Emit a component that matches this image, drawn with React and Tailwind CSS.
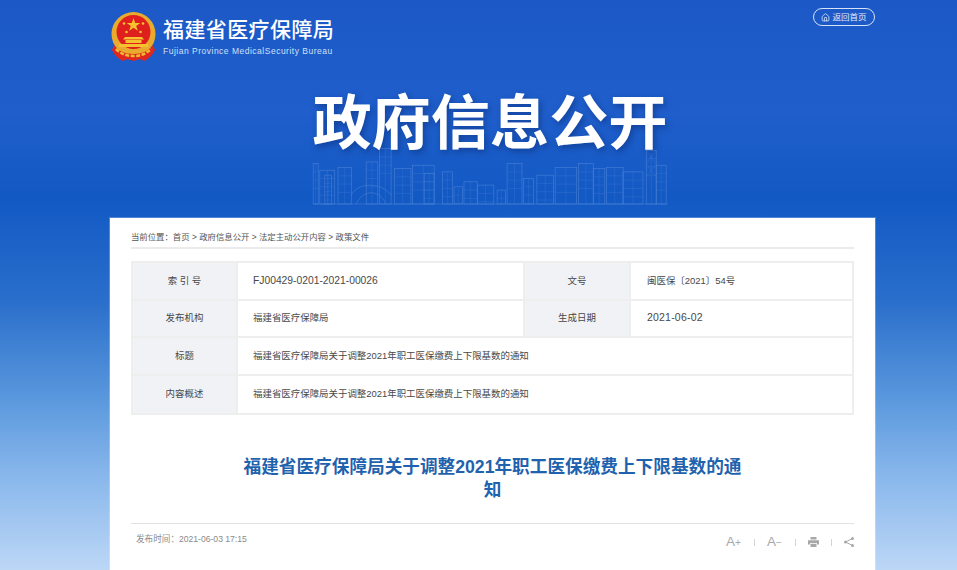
import { Home } from 'lucide-react'

const CJK = 'font-["Liberation_Sans","Noto_Sans_CJK_SC",sans-serif]'

function Emblem() {
  return (
    <svg width="47" height="50" viewBox="0 0 47 50" className="shrink-0">
      <circle cx="23.5" cy="22" r="22" fill="#e9ab2d" />
      <circle cx="23.5" cy="20" r="17" fill="#df1f1d" />
      <path d="M23.5 6l1.7 4.9h5.1l-4.1 3 1.6 4.9-4.3-3-4.3 3 1.6-4.9-4.1-3h5.1z" fill="#f5c12e" />
      <circle cx="14" cy="11.5" r="1.3" fill="#f5c12e" />
      <circle cx="33" cy="11.5" r="1.3" fill="#f5c12e" />
      <circle cx="16.5" cy="20" r="1.3" fill="#f5c12e" />
      <circle cx="30.5" cy="20" r="1.3" fill="#f5c12e" />
      <path d="M15 25h17l2 2.5H13zM15.5 28h16v3h-16zM9 32h29v3H9z" fill="#f5c12e" />
      <path d="M4 33c4 6 11 9 19.5 9S39 39 43 33l2 5c-3 6-7 9-11 11l-4-2-6.500 2-6.500-2-4 2c-4-2-8-5-11-11z" fill="#e0271f" />
      <path d="M6 37c5 5 11 7 17.500 7S36 42 41 37" stroke="#f2ba30" strokeWidth="2.500" fill="none" strokeDasharray="4 1.500" />
    </svg>
  )
}

// coordinates follow the skyline's own drawing grid
const buildings = [
  [65, 250, 15], [85, 270, 45], [100, 285, 20], [140, 262, 40], [225, 245, 35], [265, 205, 35], [310, 265, 50],
  [365, 255, 65], [400, 280, 30], [455, 275, 30], [490, 320, 25], [520, 305, 40], [560, 315, 50], [620, 330, 25],
  [650, 250, 45], [700, 295, 30], [740, 285, 50], [795, 262, 65], [865, 250, 45], [910, 265, 35], [950, 262, 50],
  [1000, 275, 60], [1070, 210, 30], [1100, 255, 30],
]

function Skyline() {
  return (
    <svg width="357" height="58" viewBox="65 200 1070 175" className="-mt-[13px] opacity-30">
      <g stroke="#a9c8f5" strokeWidth="2" fill="none">
        {buildings.map(([x, y, w], i) => (
          <g key={i}>
            <rect x={x} y={y} width={w} height={372 - y} />
            <path d={`M${x + w / 2} ${y}V372M${x} ${y + 25}H${x + w}M${x} ${y + 50}H${x + w}M${x} ${y + 75}H${x + w}`} strokeWidth="1" />
          </g>
        ))}
        <path d="M180 345c20-40 90-40 120 0M195 372c20-45 70-45 90 0" />
        <path d="M1070 210l30 40M1100 210l-30 40M1070 250l30 40M1100 250l-30 40" strokeWidth="1" />
        <path d="M65 372H1135" />
      </g>
    </svg>
  )
}

function Row({ label, children, label2, value2 }) {
  return (
    <div className="flex h-[37.5px] border-b-2 border-[#eeeeee] last:border-b-0">
      <div className="w-[103px] shrink-0 bg-[#f1f2f6] flex items-center justify-center text-[#484848]">{label}</div>
      <div className="flex-1 border-l-2 border-[#eeeeee] pl-[15px] flex items-center text-[#484848]">{children}</div>
      {label2 && (
        <>
          <div className="w-[106px] shrink-0 border-l-2 border-[#eeeeee] bg-[#f1f2f6] flex items-center justify-center text-[#484848]">{label2}</div>
          <div className="w-[223px] shrink-0 border-l-2 border-[#eeeeee] pl-[16px] flex items-center text-[#484848]">{value2}</div>
        </>
      )}
    </div>
  )
}

function Sep() {
  return <span className="h-[7px] w-px bg-[#d4d4d4]" />
}

export default function App() {
  return (
    <div className={`h-[570px] overflow-hidden flex flex-col pl-[110px] bg-[linear-gradient(180deg,#1c59c6_0%,#1f5ecb_20%,#1259c4_35%,#2a6fcb_53%,#5a98dd_70%,#8ab8ec_84%,#bcd7f6_100%)] ${CJK}`}>
      {/* Header */}
      <div className="w-[765px] h-[88px] shrink-0 flex justify-between">
        <div className="flex pt-[12px] h-fit">
          <Emblem />
          <div className="ml-[6px] text-white">
            <div className="text-[21px] leading-[25px] mt-[5px] font-medium tracking-[0.4px]">福建省医疗保障局</div>
            <div className="text-[8.5px] leading-[12px] mt-[3px] tracking-[0.5px] text-[#cfe0fa]">Fujian Province MedicalSecurity Bureau</div>
          </div>
        </div>
        <div className="mt-[8px] h-[18px] w-[62px] border border-[#d5e2f8] rounded-full flex items-center justify-center gap-[2px] text-[8.5px] text-[#e4edfb]">
          <Home size={9} />
          返回首页
        </div>
      </div>

      {/* Banner title */}
      <div className="w-[765px] h-[130px] shrink-0 flex flex-col items-center pr-[5px]">
        <div className="text-[59.200px] leading-[72px] font-bold text-white [text-shadow:2px_3px_6px_rgba(10,40,110,0.5)]">政府信息公开</div>
        <Skyline />
      </div>

      {/* Content */}
      <div className="w-[765px] flex-1 bg-white px-[21px] overflow-hidden shadow-[0_0_0_1px_rgba(255,255,255,0.25)]">
        <div className="h-[31px] pt-[8px] border-b-2 border-[#ebebeb] text-[8.400px] leading-[22px] text-[#555]">
          当前位置：首页 &gt; 政府信息公开 &gt; 法定主动公开内容 &gt; 政策文件
        </div>

        <div className="mt-[12px] border-2 border-[#eeeeee] text-[9.450px]">
          <Row label="索 引 号" label2="文号" value2="闽医保〔2021〕54号">
            <span className="text-[10.300px]">FJ00429-0201-2021-00026</span>
          </Row>
          <Row label="发布机构" label2="生成日期" value2={<span className="text-[10.500px] tracking-[0.2px]">2021-06-02</span>}>福建省医疗保障局</Row>
          <Row label="标题">福建省医疗保障局关于调整2021年职工医保缴费上下限基数的通知</Row>
          <Row label="内容概述">福建省医疗保障局关于调整2021年职工医保缴费上下限基数的通知</Row>
        </div>

        <h1 className="w-[510px] mx-auto mt-[41px] text-center text-[17.650px] leading-[23px] font-bold text-[#1f62ad]">
          福建省医疗保障局关于调整2021年职工医保缴费上下限基数的通知
        </h1>

        <div className="mt-[21px] border-t border-[#e2e2e2] flex justify-between pl-[5px] pt-[8px] text-[#8a8a8a]">
          <span className="text-[8.600px] leading-[14px]">发布时间：2021-06-03 17:15</span>
          <div className="flex items-center gap-[12px] mt-[3px] text-[#a8a8a8] h-[14px]">
            <span className="w-[16px] text-[13.500px] leading-[14px] whitespace-nowrap">A<span className="text-[10px]">+</span></span>
            <Sep />
            <span className="w-[16px] text-[13.500px] leading-[14px] whitespace-nowrap">A<span className="text-[10px]">−</span></span>
            <Sep />
            <svg width="11" height="10" viewBox="0 0 11 10" fill="#a8a8a8">
              <path d="M2.500 0h6v2.500h-6zM0 3.200h11v4.300H9V6H2v1.500H0zM2.500 6.700h6V10h-6z" />
            </svg>
            <Sep />
            <svg width="10" height="10" viewBox="0 0 10 10" fill="#a8a8a8">
              <path d="M8.500 1.500L1.500 5l7 3.500" fill="none" stroke="#a8a8a8" />
              <circle cx="8.500" cy="1.500" r="1.500" />
              <circle cx="1.500" cy="5" r="1.500" />
              <circle cx="8.500" cy="8.500" r="1.500" />
            </svg>
          </div>
        </div>
      </div>
    </div>
  )
}
